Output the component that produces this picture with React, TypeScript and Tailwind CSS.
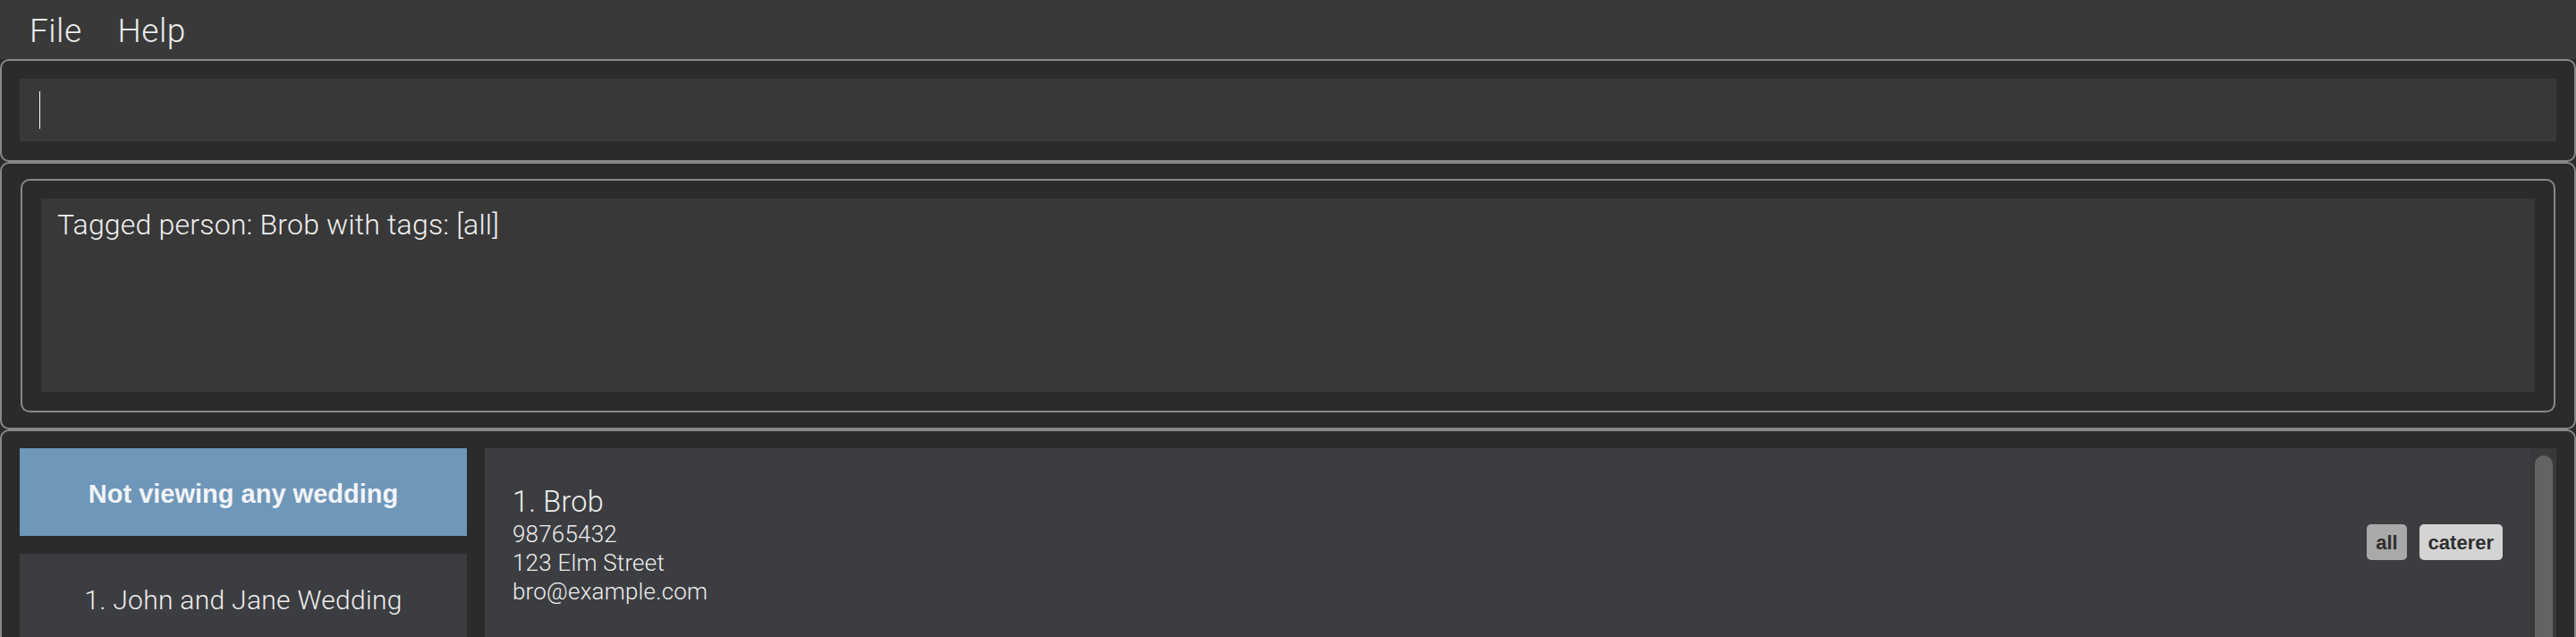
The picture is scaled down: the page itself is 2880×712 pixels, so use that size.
import React from 'react'

const light = "font-['Roboto','Liberation_Sans',sans-serif] font-light"
const bold = "font-['Liberation_Sans','Roboto',sans-serif] font-bold"

function MenuBar() {
  return (
    <div className={`h-[66px] bg-[#393939] flex items-center pt-[3px] pl-[33px] gap-[40px] text-[37px] tracking-[0.5px] text-[#ececec] ${light}`}>
      <span>File</span>
      <span>Help</span>
    </div>
  )
}

function CommandBox() {
  return (
    <div className="h-[115px] border-2 border-[#888888] rounded-[10px] bg-[#2b2b2b] pt-[20px] pb-[21px] px-[20px]">
      <div className="h-[70px] bg-[#383838] pl-[22px] pt-[14px]">
        <div className="w-px h-[42px] bg-white" />
      </div>
    </div>
  )
}

function ResultDisplay() {
  return (
    <div className="h-[299px] border-2 border-[#888888] rounded-[10px] bg-[#2b2b2b] py-[17px] px-[21px]">
      <div className="h-full border-2 border-[#888888] rounded-[10px] pt-[20px] px-[21px] pb-[21px]">
        <div className={`h-full bg-[#383838] pl-[18px] pt-[5px] text-[32px] tracking-[0.2px] text-[#f0f0f0] ${light}`}>
          Tagged person: Brob with tags: [all]
        </div>
      </div>
    </div>
  )
}

function WeddingList() {
  return (
    <div className="w-[500px] flex flex-col gap-[20px]">
      <div className={`h-[98px] bg-[#6e97b9] flex items-center justify-center pt-[5px] text-[29px] text-[#f2f4f8] ${bold}`}>
        Not viewing any wedding
      </div>
      <div className={`h-[98px] bg-[#3c3d40] flex items-center justify-center pt-[5px] text-[30px] tracking-[0.3px] text-[#eeeeee] ${light}`}>
        1. John and Jane Wedding
      </div>
    </div>
  )
}

function Tag({ label, tone }: { label: string; tone: string }) {
  return (
    <span className={`h-[40px] px-[10px] rounded-[5px] flex items-center text-[22px] text-[#2e2e2e] ${bold} ${tone}`}>
      {label}
    </span>
  )
}

function PersonList() {
  return (
    <div className="flex-1 flex">
      <div className="flex-1 bg-[#3c3d40] pt-[44px] pl-[31px] pr-[30px] flex justify-between items-start">
        <div className={`text-[#eeeeee] ${light}`}>
          <div className="text-[32.5px] leading-[32px] tracking-[0.2px]">1. Brob</div>
          <div className="mt-[4px] text-[26px] leading-[32px] tracking-[0.2px]">
            <div>98765432</div>
            <div>123 Elm Street</div>
            <div>bro@example.com</div>
          </div>
        </div>
        <div className="mt-[41px] flex gap-[14px]">
          <Tag label="all" tone="bg-[#a9a9a9]" />
          <Tag label="caterer" tone="bg-[#d4d4d4]" />
        </div>
      </div>
      <div className="w-[30px] bg-[#38393b] pt-[8px] pl-[6px]">
        <div className="w-[20px] h-[400px] rounded-[10px] bg-[#636363]" />
      </div>
    </div>
  )
}

export default function App() {
  return (
    <div className="h-[712px] overflow-hidden bg-[#2b2b2b]">
      <MenuBar />
      <CommandBox />
      <ResultDisplay />
      <div className="h-[500px] border-2 border-[#888888] rounded-[10px] bg-[#2b2b2b] pt-[19px] px-[20px] flex gap-[20px]">
        <WeddingList />
        <PersonList />
      </div>
    </div>
  )
}
